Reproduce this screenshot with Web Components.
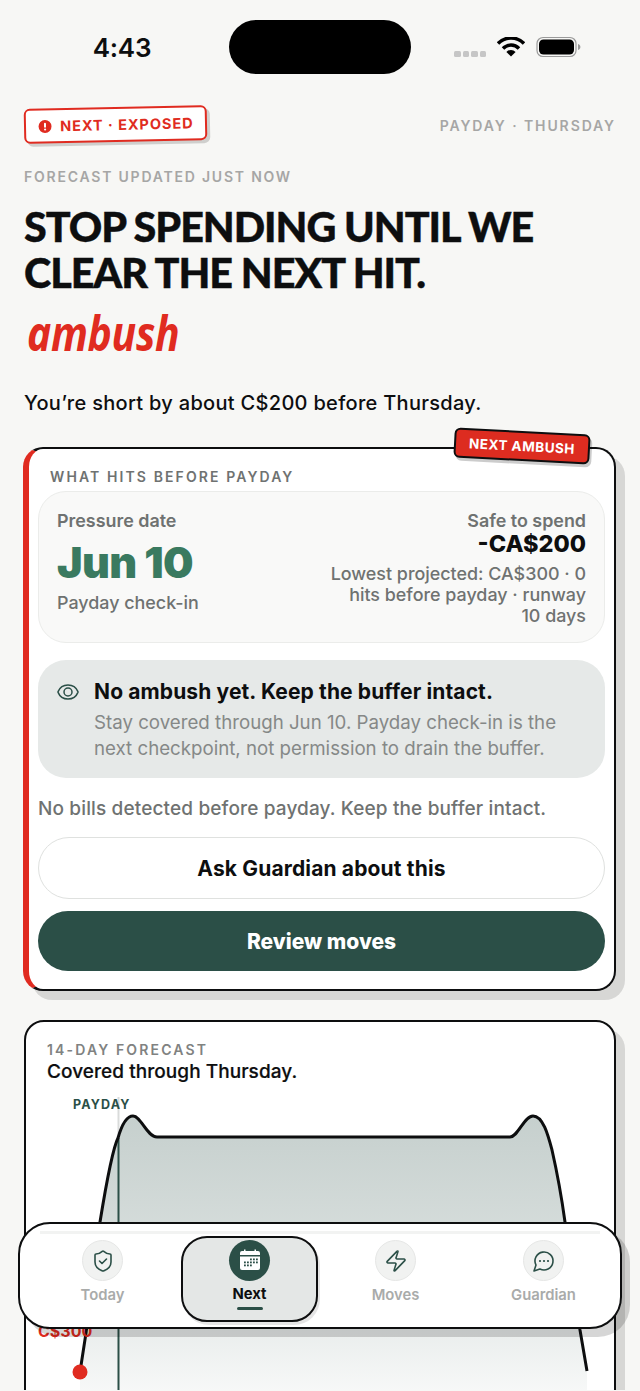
<!DOCTYPE html>
<html lang="en">
<head>
<meta charset="utf-8">
<title>Next</title>
<style>
    html, body { margin: 0; padding: 0; background: #f7f7f5; }
    html { overflow: hidden; }
    body {
        width: 640px;
        height: 1391px;
        overflow: hidden;
        position: relative;
        font-family: Inter, "Liberation Sans", sans-serif;
        color: #0d0e0f;
    }
</style>
</head>
<body>
<status-bar></status-bar>
<next-header></next-header>
<ambush-card></ambush-card>
<forecast-card></forecast-card>
<bottom-nav>
    <nav-item label="Today" icon="shield"></nav-item>
    <nav-item label="Next" icon="calendar" active></nav-item>
    <nav-item label="Moves" icon="zap"></nav-item>
    <nav-item label="Guardian" icon="chat"></nav-item>
</bottom-nav>

<script>
// Status bar
const templateStatusBar = document.createElement('template');
templateStatusBar.innerHTML = `
    <style>
        :host { display: block; height: 94px; position: relative; }
        .row { display: grid; grid-template-columns: 229px 182px 1fr; grid-template-rows: 54px; padding-top: 20px; }
        .time { font-size: 26px; font-weight: 600; line-height: 56px; height: 54px; text-align: center; padding-left: 15px; letter-spacing: -.25px; }
        .island { background: #000; border-radius: 27px; }
        .right { display: flex; align-items: center; padding-left: 43px; }
        .dots { display: flex; gap: 2px; margin-top: 14px; margin-right: 11px; }
        .dots i { width: 6.5px; height: 6px; background: #c6c6c6; border-radius: 1.5px; }
        svg { display: block; }
    </style>
    <div class="row">
        <div class="time">4:43</div>
        <div class="island"></div>
        <div class="right">
            <div class="dots"><i></i><i></i><i></i><i></i></div>
            <svg width="28" height="20" viewBox="0 0 28 20">
                <path d="M1 6.500a18 18 0 0 1 26 0" fill="none" stroke="#000" stroke-width="3.400"/>
                <path d="M6 11.500a11 11 0 0 1 16 0" fill="none" stroke="#000" stroke-width="3.400"/>
                <path d="M14 19.500l-4.600-4.600a6.500 6.500 0 0 1 9.200 0z" fill="#000"/>
            </svg>
            <svg width="46" height="22" viewBox="0 0 46 22" style="margin-left:11px">
                <rect x="1" y="1.500" width="39" height="19" rx="6" fill="none" stroke="#9a9a9a" stroke-width="1.200"/>
                <rect x="3" y="3.500" width="35" height="15" rx="4.500" fill="#000"/>
                <path d="M42 8v6c1.600-.5 2.400-1.600 2.400-3s-.8-2.500-2.400-3z" fill="#9a9a9a"/>
            </svg>
        </div>
    </div>
`;
class StatusBar extends HTMLElement {
    constructor() {
        super();
        this.attachShadow({ mode: 'open' });
        this.shadowRoot.appendChild(templateStatusBar.content.cloneNode(true));
    }
}
customElements.define('status-bar', StatusBar);

// Page heading block
const templateHeader = document.createElement('template');
templateHeader.innerHTML = `
    <style>
        :host { display: block; padding: 0 24px 0 24px; }
        .top { display: flex; justify-content: space-between; align-items: center; height: 62px; }
        .stamp {
            display: flex; align-items: center; gap: 8px;
            width: 183px; height: 35px; box-sizing: border-box; padding-left: 12px;
            background: #fff; border: 2.5px solid #e02b20; border-radius: 6px;
            box-shadow: 3px 3px 0 rgba(0,0,0,.16);
            color: #e02b20; font-size: 14.5px; font-weight: 700; letter-spacing: .95px;
            transform: rotate(-1.2deg);
            margin-top: -1px;
        }
        .stamp svg { flex: none; }
        .payday { color: #a6a6a5; font-size: 14px; font-weight: 600; letter-spacing: 1.9px; }
        .updated { color: #a6a6a5; font-size: 14px; font-weight: 600; letter-spacing: 1.78px; line-height: 18px; margin-top: 12px; }
        h1 {
            margin: 17px 0 0; font-family: Lato, "Liberation Sans", sans-serif;
            font-size: 41.3px; font-weight: 900; line-height: 46px; letter-spacing: -1.05px; color: #0d0e0f;
            -webkit-text-stroke: .4px #0d0e0f;
        }
        .scrawl {
            font-family: "Noto Sans", "Liberation Sans", sans-serif; font-style: italic; font-weight: 700;
            font-size: 43px; line-height: 60px; height: 58px; margin-top: 8px; color: #e02b20; letter-spacing: -.3px;
            transform-origin: 0 50%; transform: translateX(3px) scale(.95, 1.12);
        }
        .sub { font-size: 20px; font-weight: 500; line-height: 26px; margin-top: 29px; letter-spacing: .3px; }
    </style>
    <div class="top">
        <div class="stamp">
            <svg width="14" height="14" viewBox="0 0 14 14"><circle cx="7" cy="7" r="6.500" fill="#e02b20"/><rect x="6" y="3.200" width="2" height="5" rx="1" fill="#fff"/><circle cx="7" cy="10" r="1.100" fill="#fff"/></svg>
            <span>NEXT · EXPOSED</span>
        </div>
        <div class="payday">PAYDAY · THURSDAY</div>
    </div>
    <div class="updated">FORECAST UPDATED JUST NOW</div>
    <h1>STOP SPENDING UNTIL WE<br>CLEAR THE NEXT HIT.</h1>
    <div class="scrawl">ambush</div>
    <div class="sub">You’re short by about C$200 before Thursday.</div>
`;
class NextHeader extends HTMLElement {
    constructor() {
        super();
        this.attachShadow({ mode: 'open' });
        this.shadowRoot.appendChild(templateHeader.content.cloneNode(true));
    }
}
customElements.define('next-header', NextHeader);

// The main card
const templateAmbushCard = document.createElement('template');
templateAmbushCard.innerHTML = `
    <style>
        :host { display: block; margin: 31px 24px 0 23px; position: relative; }
        .card {
            height: 544px; box-sizing: border-box; position: relative;
            background: #fff; border: 2.5px solid #0d0e0f; border-left: 6px solid #e02b20; border-radius: 20px;
            box-shadow: 9px 9px 0 rgba(0,0,0,.13);
            padding: 19px 9px 0 9px;
        }
        .flag {
            position: absolute; top: -18px; right: 24px; width: 132px; height: 26px;
            display: flex; align-items: center; justify-content: center;
            background: #dd2c20; border: 2.5px solid #0d0e0f; border-radius: 6px;
            box-shadow: 2px 3px 0 rgba(0,0,0,.2);
            color: #fff; font-size: 13.5px; font-weight: 700; letter-spacing: .5px;
            transform: rotate(3deg);
        }
        .eyebrow { font-size: 14px; font-weight: 600; letter-spacing: 2.1px; line-height: 18px; color: #6f7271; padding-left: 12px; }
        .pressure {
            display: flex; justify-content: space-between; box-sizing: border-box; height: 152px; margin-top: 5px;
            background: #f9f9f8; border: 1.5px solid #ebecea; border-radius: 28px; padding: 17px 18px 0;
            color: #6f7271; font-size: 17.9px; font-weight: 500;
        }
        .left .label { font-weight: 600; line-height: 24px; }
        .date { font-size: 43px; font-weight: 900; color: #3a7a60; letter-spacing: -.7px; line-height: 50px; margin-top: 4px; }
        .left .note { line-height: 24px; margin-top: 4px; }
        .right { width: 258px; text-align: right; }
        .right .label { font-weight: 600; line-height: 24px; }
        .amount { font-size: 23.5px; font-weight: 800; color: #0d0e0f; line-height: 24px; margin-top: -1px; }
        .detail { line-height: 21px; margin-top: 7px; }
        .watch {
            box-sizing: border-box; height: 118px; margin-top: 17px; background: #e6e9e8; border-radius: 28px;
            display: grid; grid-template-columns: 24px 1fr; column-gap: 14px; padding: 19px 30px 0 18px;
        }
        .watch svg { margin-top: 1px; display: block; }
        .watch h3 { margin: 0; font-size: 21px; font-weight: 700; line-height: 26px; letter-spacing: .12px; color: #0d0e0f; }
        .watch p { margin: 5px 0 0; font-size: 18.7px; font-weight: 400; line-height: 26px; color: #858887; }
        .bills { font-size: 19px; font-weight: 500; line-height: 24px; letter-spacing: .14px; color: #6f7271; margin-top: 19px; }
        .btn {
            display: flex; align-items: center; justify-content: center; box-sizing: border-box;
            font-size: 21px; font-weight: 700; border-radius: 31px; letter-spacing: .15px;
        }
        .ask { height: 62px; margin-top: 16px; background: #fff; border: 1.5px solid #dfe1df; color: #0d0e0f; }
        .review { height: 60px; margin-top: 12px; background: #2b4f47; color: #fff; font-weight: 800; letter-spacing: 0; }
    </style>
    <div class="card">
        <div class="flag">NEXT AMBUSH</div>
        <div class="eyebrow">WHAT HITS BEFORE PAYDAY</div>
        <div class="pressure">
            <div class="left">
                <div class="label">Pressure date</div>
                <div class="date">Jun 10</div>
                <div class="note">Payday check-in</div>
            </div>
            <div class="right">
                <div class="label">Safe to spend</div>
                <div class="amount">-CA$200</div>
                <div class="detail">Lowest projected: CA$300 · 0 hits before payday · runway 10 days</div>
            </div>
        </div>
        <div class="watch">
            <svg width="24" height="24" viewBox="0 0 24 24" fill="none" stroke="#2b4f47" stroke-width="1.500" stroke-linecap="round" stroke-linejoin="round">
                <path d="M2.062 12.348a1 1 0 0 1 0-.696 10.75 10.75 0 0 1 19.876 0 1 1 0 0 1 0 .696 10.75 10.750 0 0 1-19.876 0"/>
                <circle cx="12" cy="12" r="4"/>
            </svg>
            <div>
                <h3>No ambush yet. Keep the buffer intact.</h3>
                <p>Stay covered through Jun 10. Payday check-in is the next checkpoint, not permission to drain the buffer.</p>
            </div>
        </div>
        <div class="bills">No bills detected before payday. Keep the buffer intact.</div>
        <div class="btn ask">Ask Guardian about this</div>
        <div class="btn review">Review moves</div>
    </div>
`;
class AmbushCard extends HTMLElement {
    constructor() {
        super();
        this.attachShadow({ mode: 'open' });
        this.shadowRoot.appendChild(templateAmbushCard.content.cloneNode(true));
    }
}
customElements.define('ambush-card', AmbushCard);

// Forecast chart card, cut off by the bottom of the window
const templateForecastCard = document.createElement('template');
templateForecastCard.innerHTML = `
    <style>
        :host { display: block; margin: 29px 0 0 24px; height: 370px; overflow: hidden; }
        .card {
            width: 592px; height: 460px; box-sizing: border-box; position: relative;
            background: #fff; border: 2.5px solid #0d0e0f; border-radius: 20px;
            box-shadow: 9px 9px 0 rgba(0,0,0,.13);
            padding: 19px 20px 0 21px;
        }
        .eyebrow { font-size: 14px; font-weight: 600; letter-spacing: 2.15px; line-height: 18px; color: #808281; }
        .title { font-size: 19px; font-weight: 500; line-height: 26px; letter-spacing: .06px; color: #0d0e0f; -webkit-text-stroke: .2px #0d0e0f; }
        svg { position: absolute; left: -2.5px; top: -2.5px; overflow: visible; }
        text { font-family: Inter, "Liberation Sans", sans-serif; }
    </style>
    <div class="card">
        <div class="eyebrow">14-DAY FORECAST</div>
        <div class="title">Covered through Thursday.</div>
        <!-- svg origin is the card corner at 24,1020 on the page -->
        <svg width="592" height="400" viewBox="24 1020 592 400">
            <defs>
                <linearGradient id="area" x1="0" y1="1116" x2="0" y2="1400" gradientUnits="userSpaceOnUse">
                    <stop offset="0" stop-color="#2b4f47" stop-opacity=".27"/>
                    <stop offset=".4" stop-color="#2b4f47" stop-opacity=".2"/>
                    <stop offset="1" stop-color="#2b4f47" stop-opacity=".03"/>
                </linearGradient>
            </defs>
            <path d="M80 1372 L86 1333 C91 1295 96 1250 100 1222 C106 1185 112 1150 118 1138 C122 1124 127 1116 133 1116 C141 1116 147 1137 157 1137 L510 1137 C518 1137 524 1116 533 1116 C543 1116 548 1135 552 1150 C557 1172 562 1200 565 1222 C570 1260 575 1295 580 1330 L587 1371 L587 1391 L80 1391 Z" fill="url(#area)"/>
            <line x1="118.500" y1="1097" x2="118.500" y2="1140" stroke="#d9dbda" stroke-width="2"/>
            <line x1="118.500" y1="1138" x2="118.500" y2="1391" stroke="#2b4f47" stroke-width="2"/>
            <path d="M80 1372 L86 1333 C91 1295 96 1250 100 1222 C106 1185 112 1150 118 1138 C122 1124 127 1116 133 1116 C141 1116 147 1137 157 1137 L510 1137 C518 1137 524 1116 533 1116 C543 1116 548 1135 552 1150 C557 1172 562 1200 565 1222 C570 1260 575 1295 580 1330 L587 1371" fill="none" stroke="#0d0e0f" stroke-width="3"/>
            <circle cx="80" cy="1372" r="7.500" fill="#e02b20"/>
            <text x="73" y="1109" font-size="12.500" font-weight="700" letter-spacing="1.150" fill="#2b4f47">PAYDAY</text>
            <text x="38" y="1337" font-size="16" font-weight="700" fill="#e02b20">C$300</text>
        </svg>
    </div>
`;
class ForecastCard extends HTMLElement {
    constructor() {
        super();
        this.attachShadow({ mode: 'open' });
        this.shadowRoot.appendChild(templateForecastCard.content.cloneNode(true));
    }
}
customElements.define('forecast-card', ForecastCard);

// Floating tab bar
const templateBottomNav = document.createElement('template');
templateBottomNav.innerHTML = `
    <style>
        :host { display: block; position: absolute; left: 18px; top: 1222px; width: 604px; }
        .bar {
            box-sizing: border-box; height: 107px; position: relative;
            background: #fff; border: 2.5px solid #0d0e0f; border-radius: 32px;
            box-shadow: 8px 8px 0 rgba(0,0,0,.16);
            display: grid; grid-template-columns: 157px 137px 155px 141px; align-items: start;
            padding: 12px 0 0 4px;
        }
        .bar::before {
            content: ''; position: absolute; left: 20px; right: 20px; top: 7px; height: 3px; background: #f2f3f2;
        }
        ::slotted(nav-item) { position: relative; }
    </style>
    <div class="bar"><slot></slot></div>
`;
class BottomNav extends HTMLElement {
    constructor() {
        super();
        this.attachShadow({ mode: 'open' });
        this.shadowRoot.appendChild(templateBottomNav.content.cloneNode(true));
    }
}
customElements.define('bottom-nav', BottomNav);

const navIcons = {
    shield: `<svg width="24" height="24" viewBox="0 0 24 24" fill="none" stroke="#2b4f47" stroke-width="1.600" stroke-linecap="round" stroke-linejoin="round"><path d="M20 13c0 5-3.500 7.500-7.660 8.950a1 1 0 0 1-.67-.01C7.500 20.500 4 18 4 13V6a1 1 0 0 1 1-1c2 0 4.500-1.200 6.240-2.720a1.170 1.170 0 0 1 1.520 0C14.510 3.810 17 5 19 5a1 1 0 0 1 1 1z"/><path d="m8.500 12 2.500 2.500 4.500-4.500"/></svg>`,
    calendar: `<svg width="24" height="24" viewBox="0 0 24 24"><path d="M4 3h2V1.500h1.500V3h9V1.500H18V3h2a2 2 0 0 1 2 2v2H2V5a2 2 0 0 1 2-2z" fill="#fff"/><path d="M2 8.500h20V20a2 2 0 0 1-2 2H4a2 2 0 0 1-2-2z" fill="#fff"/><g fill="#2b4f47"><rect x="12" y="10.500" width="1.800" height="1.800"/><rect x="15" y="10.500" width="1.800" height="1.800"/><rect x="18" y="10.500" width="1.800" height="1.800"/><rect x="6" y="13.500" width="1.800" height="1.800"/><rect x="9" y="13.500" width="1.800" height="1.800"/><rect x="12" y="13.500" width="1.800" height="1.800"/><rect x="15" y="13.500" width="1.800" height="1.800"/><rect x="18" y="13.500" width="1.800" height="1.800"/><rect x="6" y="16.500" width="1.800" height="1.800"/><rect x="9" y="16.500" width="1.800" height="1.800"/><rect x="12" y="16.500" width="1.800" height="1.800"/></g></svg>`,
    zap: `<svg width="24" height="24" viewBox="0 0 24 24" fill="none" stroke="#2b4f47" stroke-width="1.600" stroke-linecap="round" stroke-linejoin="round"><path d="M4 14a1 1 0 0 1-.78-1.630l9.900-10.200a.5.5 0 0 1 .86.460l-1.920 6.020A1 1 0 0 0 13 10h7a1 1 0 0 1 .78 1.630l-9.900 10.200a.5.5 0 0 1-.86-.460l1.920-6.020A1 1 0 0 0 11 14z"/></svg>`,
    chat: `<svg width="24" height="24" viewBox="0 0 24 24" fill="none" stroke="#2b4f47" stroke-width="1.600" stroke-linecap="round" stroke-linejoin="round"><path d="M7.900 20A9 9 0 1 0 4 16.100L2 22Z"/><path d="M8 12h.01M12 12h.01M16 12h.01" stroke-width="2.200"/></svg>`
};

const templateNavItem = document.createElement('template');
templateNavItem.innerHTML = `
    <style>
        :host { display: block; }
        .item { display: flex; flex-direction: column; align-items: center; box-sizing: border-box; height: 86px; }
        .disc {
            width: 41px; height: 41px; box-sizing: border-box; margin-top: 4px; border-radius: 50%;
            display: flex; align-items: center; justify-content: center;
            background: #f1f2f1; border: 1.5px solid #e6e7e6;
        }
        .label { font-size: 14.8px; font-weight: 600; line-height: 20px; margin-top: 3.5px; color: #a9abaa; }
        .mark { display: none; width: 26px; height: 3px; border-radius: 2px; background: #2b4f47; margin-top: 2.5px; }
        :host([active]) .item {
            background: #e4e7e6; border: 2.5px solid #0d0e0f; border-radius: 26px; box-shadow: 2px 3px 0 rgba(0,0,0,.1);
        }
        :host([active]) .disc { background: #2b4f47; border: none; margin-top: 1.5px; }
        :host([active]) .label { color: #0d0e0f; font-weight: 700; }
        :host([active]) .mark { display: block; }
        svg { display: block; }
    </style>
    <div class="item">
        <div class="disc"></div>
        <div class="label"></div>
        <div class="mark"></div>
    </div>
`;
class NavItem extends HTMLElement {
    constructor() {
        super();
        this.attachShadow({ mode: 'open' });
        this.shadowRoot.appendChild(templateNavItem.content.cloneNode(true));
    }

    connectedCallback() {
        this.shadowRoot.querySelector('.label').textContent = this.getAttribute('label');
        this.shadowRoot.querySelector('.disc').innerHTML = navIcons[this.getAttribute('icon')];
    }
}
customElements.define('nav-item', NavItem);
</script>
</body>
</html>
